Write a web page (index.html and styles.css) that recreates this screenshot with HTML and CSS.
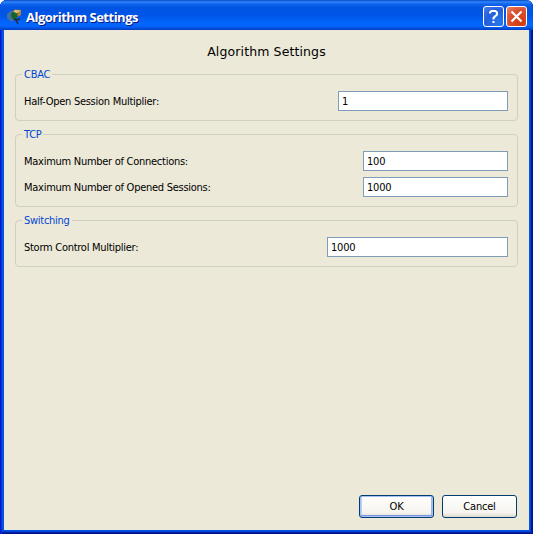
FILE: index.html
```html
<!DOCTYPE html>
<html lang="en">
<head>
<meta charset="utf-8">
<title>Algorithm Settings</title>
<link rel="stylesheet" href="styles.css">
</head>
<body>
<div class="window">
  <header class="titlebar">
    <svg class="app-icon" width="16" height="16" viewBox="0 0 16 16">
      <path d="M5 3l3-2.500 6 .5v5l-4 2-5-2z" fill="#a98443"/>
      <path d="M5 3l3-2 6 .5-4 2.500z" fill="#dfc276"/>
      <path d="M10 4v4" stroke="#5b431d"/>
      <circle cx="4.800" cy="7" r="4.500" fill="#3c73a4" stroke="#526d8e"/>
      <path d="M4 4l3-1 3 2v4l-3 2-2-2-1-2z" fill="#17652a"/>
      <path d="M7 10l2 1 2 4M9 11l4-1" stroke="#20283a" stroke-width="1.400" fill="none"/>
    </svg>
    <h1 class="caption">Algorithm Settings</h1>
    <button class="caption-button help" aria-label="Help">
      <svg width="19" height="19" viewBox="0 0 19 19"><path d="M6 6.500V5.500L7.500 4h4L13 5.500v2L9.500 11v1.500M9.500 14v2" fill="none" stroke="#fff" stroke-width="2"/></svg>
    </button>
    <button class="caption-button close" aria-label="Close">
      <svg width="19" height="19" viewBox="0 0 19 19"><path d="M4.500 4.500l10 10M14.500 4.500l-10 10" stroke="#fff" stroke-width="2.200"/></svg>
    </button>
  </header>
  <main class="content">
    <h2 class="heading">Algorithm Settings</h2>
    <section class="group">
      <h3 class="legend">CBAC</h3>
      <label class="row"><span class="label">Half-Open Session Multiplier:</span><input class="field medium" value="1"></label>
    </section>
    <section class="group">
      <h3 class="legend">TCP</h3>
      <label class="row"><span class="label">Maximum Number of Connections:</span><input class="field short" value="100"></label>
      <label class="row"><span class="label">Maximum Number of Opened Sessions:</span><input class="field short" value="1000"></label>
    </section>
    <section class="group">
      <h3 class="legend">Switching</h3>
      <label class="row"><span class="label">Storm Control Multiplier:</span><input class="field long" value="1000"></label>
    </section>
    <footer class="actions">
      <button class="button default">OK</button>
      <button class="button">Cancel</button>
    </footer>
  </main>
</div>
</body>
</html>
```
FILE: styles.css
```css
* { box-sizing: border-box; }
body {
  margin: 0;
  background: #fff;
  font: 11px/14px "DejaVu Sans Condensed", "DejaVu Sans", sans-serif;
  letter-spacing: -0.27px;
  color: #000;
}
.window {
  display: flex;
  flex-direction: column;
  width: 533px;
  height: 534px;
  padding: 0 4px 4px;
  border-radius: 7px 7px 0 0;
  background: #0054e3;
  box-shadow: inset 1px 0 #0019cf, inset 2px 0 #0831d9, inset -1px -1px #00138c, inset -2px -2px #001ea0, inset -3px -3px #0441d8;
}
.titlebar {
  display: flex;
  align-items: center;
  height: 30px;
  margin: 0 -4px;
  padding: 3px 6px 0 7px;
  border-radius: 7px 7px 0 0;
  background: linear-gradient(#0848c6 0, #2e87fa 2px, #1263ed 4px, #0054e3 8px, #0055e8 16px, #0264fb 22px, #0266ff 26px, #0049d2 29px, #003dc0 30px);
}
.app-icon { flex: none; }
.caption {
  flex: 1;
  margin: 0 0 0 3px;
  font: bold 13px/16px "Open Sans", "Noto Sans", sans-serif;
  letter-spacing: -0.5px;
  color: #fff;
  text-shadow: 1px 1px #0a1883;
  white-space: nowrap;
}
.caption-button {
  flex: none;
  width: 21px;
  height: 21px;
  margin-left: 2px;
  padding: 0;
  border: 1px solid #fff;
  border-radius: 3px;
}
.caption-button svg { display: block; }
.help { background: radial-gradient(circle at 80% 85%, #2677ed, #245fdc 60%, #4a7fe9); }
.close { background: radial-gradient(circle at 75% 80%, #d23b0c, #dc5030 60%, #e98a70); }
.content {
  display: flex;
  flex: 1;
  flex-direction: column;
  padding: 14px 12px 12px 11px;
  background: #ece9d8;
}
.heading {
  margin: 0 0 14px 1px;
  font: 12.5px/16px "DejaVu Sans", sans-serif;
  letter-spacing: 0.12px;
  text-align: center;
}
.group {
  display: flex;
  flex-direction: column;
  gap: 6px;
  width: 503px;
  margin-bottom: 13px;
  padding: 0 9px 9px 8px;
  border: 1px solid #d0d0bf;
  border-radius: 4px;
}
.legend {
  align-self: flex-start;
  height: 14px;
  margin: -8px 0 4px -2px;
  padding: 1px 2px 0;
  background: #ece9d8;
  font: inherit;
  color: #0046d5;
}
.row {
  display: flex;
  align-items: center;
  justify-content: space-between;
  height: 20px;
  white-space: nowrap;
}
.label { padding-top: 1px; }
.field {
  height: 20px;
  padding: 0 3px;
  border: 1px solid #7f9db9;
  border-radius: 0;
  outline: 0;
  background: #fff;
  font: inherit;
  letter-spacing: -0.2px;
  color: #000;
}
.medium { width: 170px; }
.short { width: 145px; }
.long { width: 181px; }
.actions {
  display: flex;
  justify-content: flex-end;
  gap: 8px;
  margin-top: auto;
}
.button {
  width: 75px;
  height: 23px;
  padding: 0;
  border: 1px solid #003c74;
  border-radius: 3px;
  background: linear-gradient(#fff, #f5f4ee 80%, #dcd8cd);
  font: inherit;
  letter-spacing: -0.2px;
  color: #000;
}
.default { box-shadow: inset 0 0 0 1px #a9c1f2, inset 0 -2px #7895e2, inset 2px 0 #bad0f5, inset -2px 0 #9bb5ed; }
```
